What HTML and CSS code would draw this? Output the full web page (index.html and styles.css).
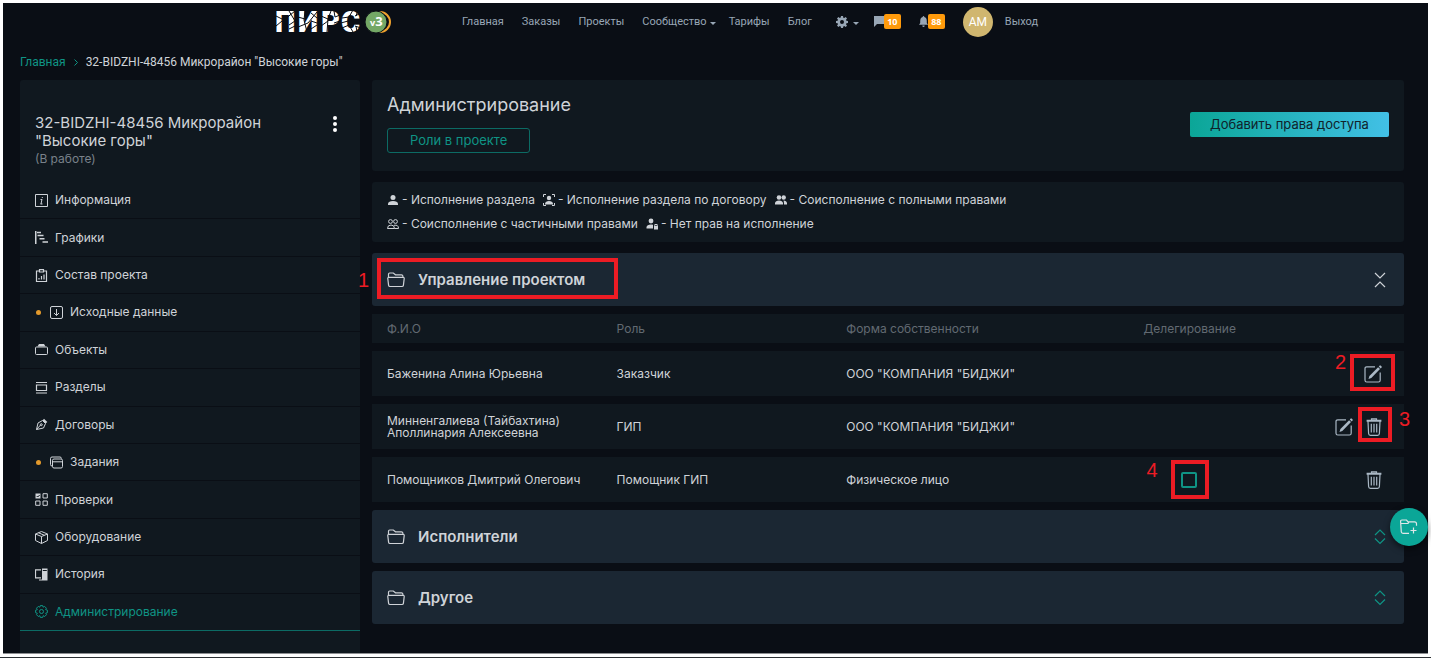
FILE: index.html
```html
<!DOCTYPE html>
<html lang="ru">
<head>
<meta charset="utf-8">
<title>Администрирование</title>
<link rel="stylesheet" href="styles.css">
</head>
<body>
<svg width="0" height="0" class="sprite" aria-hidden="true">
  <symbol id="folder" viewBox="0 0 18 16"><path d="M1.5 6V2.2Q1.5 1 2.7 1h3.6l2.2 1.8h6Q15.7 2.8 15.9 4v1.3M2 5.3h14q1.4 0 1.2 1.4l-.8 6.6q-.2 1.2-1.4 1.2H3q-1.2 0-1.4-1.2L.8 6.7Q.6 5.3 2 5.3Z"/></symbol>
  <symbol id="edit" viewBox="0 0 18 18"><path d="M11 1.8H2.8Q1 1.8 1 3.6v11.6Q1 17 2.8 17h11.6q1.8 0 1.8-1.8V7.5"/><path class="solid" d="M14.1 2.2l1.9 1.9-8.7 8.8-2.8 1 .9-2.9ZM14.8 1.5l.9-.9q.5-.4 1 0l.9.9q.4.5 0 1l-.9.9Z"/></symbol>
  <symbol id="trash" viewBox="0 0 16 18"><path d="M.6 3.2h14.8M.6 2.3h14.8M5.5 2V.8h5V2M2 3.5l.6 12q.1 1.8 1.8 1.8h7.2q1.7 0 1.8-1.8l.6-12M5.3 5.8v8.6M8 5.8v8.6M10.7 5.8v8.6"/></symbol>
  <symbol id="close-v" viewBox="0 0 12 16"><path d="M1 1l5 5 5-5M1 15l5-5 5 5"/></symbol>
  <symbol id="open-v" viewBox="0 0 12 16"><path d="M1 6l5-5 5 5M1 9.5l5 5 5-5"/></symbol>
</svg>
<div class="page">
  <header class="top">
    <a class="logo" href="#" aria-label="ПИРС v3">
      <svg width="115" height="36" viewBox="0 -5 115 36">
        <text class="logo-word" x="-1 22 45 65" y="23">ПИРС</text>
        <path class="cracks" d="M0 7l8 4 11-9M0 17l6-5M13 2l6 10-6 4M13 20l6-3M22 8l7 2M22 18l10-4 9-11M29 2l-1 9 3 12M35 12l6 2M35 4l6 5M35 20l6-4M45 7l7 3 3-8M45 17l7-5M52 10l-1 13M58 2l1 6 5-2M58 14l6-2M66 9l7-1 4-7M65 14l7-2M66 19l7-3 4 7M79 7l6-3M79 17l6 2M82 1l-2 6M81 23l-1-6"/>
        <circle class="ring" cx="104" cy="13" r="10"/>
        <circle class="ball" cx="100" cy="13" r="11"/>
        <text class="ver" x="94" y="17"><tspan class="ver-v">v</tspan>3</text>
      </svg>
    </a>
    <nav class="nav">
      <a href="#">Главная</a>
      <a href="#">Заказы</a>
      <a href="#">Проекты</a>
      <a href="#" class="drop close">Сообщество</a>
      <a href="#">Тарифы</a>
      <a href="#">Блог</a>
      <a href="#" class="drop gear" aria-label="Настройки"><svg width="12" height="12" viewBox="0 0 12 12"><path fill-rule="evenodd" d="M5 0h2l.3 1.7 1 .4L9.700 1 11 2.400l-1 1.300.4 1L12 5v2l-1.600.3-.4 1 1 1.400L9.600 11l-1.300-1-1 .4L7 12H5l-.3-1.600-1-.4L2.400 11 1 9.600l1-1.300-.4-1L0 7V5l1.600-.3.4-1-1-1.300L2.400 1l1.300 1 1-.4ZM6 4a2 2 0 1 0 0 4 2 2 0 0 0 0-4Z"/></svg></a>
      <a href="#" class="note" aria-label="Сообщения 10"><svg width="10" height="11" viewBox="0 0 10 11"><path d="M0 0h10v8H3L0 11Z"/></svg><span class="count">10</span></a>
      <a href="#" class="note" aria-label="Уведомления 88"><svg width="9" height="11" viewBox="0 0 9 11"><path d="M4.500 0q.8 0 .8.900Q7.800 1.500 7.800 5v2L9 8.800H0L1.200 7V5q0-3.500 2.500-4.100 0-.9.800-.9ZM3.300 9.500h2.400q0 1.500-1.200 1.500T3.300 9.500Z"/></svg><span class="count">88</span></a>
      <span class="avatar">AM</span>
      <a href="#">Выход</a>
    </nav>
  </header>

  <nav class="crumbs"><a href="#">Главная</a><svg width="4" height="7" viewBox="0 0 4 7"><path d="M.5.5l3 3-3 3"/></svg><span>32-BIDZHI-48456 Микрорайон "Высокие горы"</span></nav>

  <div class="columns">
    <aside class="side">
      <div class="project">
        <div>
          <h2>32-BIDZHI-48456 Микрорайон "Высокие горы"</h2>
          <p>(В работе)</p>
        </div>
        <button class="dots" aria-label="Меню проекта"><svg width="4" height="16" viewBox="0 0 4 16"><circle cx="2" cy="2" r="2"/><circle cx="2" cy="8" r="2"/><circle cx="2" cy="14" r="2"/></svg></button>
      </div>
      <nav class="menu">
        <a href="#"><svg viewBox="0 0 13 13"><path d="M.5.5h12v12H.5ZM7 5.200l-1 4.800M7.300 3v1M5.500 5.500H7M5.500 10h2"/></svg>Информация</a>
        <a href="#"><svg viewBox="0 0 13 13"><path d="M.7 0v13M2 1.500h4M2.500 4.500h6M4.500 7.700h5M7.500 11H13" stroke-width="1.600"/></svg>Графики</a>
        <a href="#"><svg viewBox="0 0 13 13"><path d="M4 2H1.500v10.500h10V2H9M4.500.600h4v2.400h-4ZM4 10.500V9M6.500 10.500V7M9 10.500v-5" stroke-width="1.200"/></svg>Состав проекта</a>
        <a href="#"><i></i><svg viewBox="0 0 13 13"><rect x=".5" y=".5" width="12" height="12" rx="1.500"/><path d="M6.500 3v6.500M4 7l2.500 2.500L9 7"/></svg>Исходные данные</a>
        <a href="#"><svg viewBox="0 0 13 13"><path class="solid" d="M2.500 3.500L4 1h5l1.500 2.500Z"/><rect x=".5" y="4" width="12" height="7.500" rx="1"/></svg>Объекты</a>
        <a href="#"><svg viewBox="0 0 13 13"><path d="M1 1.500h11M1 12h11M1.500 4h10v5.500h-10Z" stroke-width="1.200"/></svg>Разделы</a>
        <a href="#"><svg viewBox="0 0 13 13"><path d="M1.500 11.500L3 5l4.500-2.500 3 3L8.500 10ZM1.500 11.500l4.500-5"/><path class="solid" d="M7.500 2.500L9 .800l3.300 3.300-1.800 1.500Z"/><circle cx="6.300" cy="6.700" r="1"/></svg>Договоры</a>
        <a href="#"><i></i><svg viewBox="0 0 13 13"><path d="M2.500 10H2Q.5 10 .5 8.500V2.500Q.5 1 2 1h8q1.300 0 1.500 1.500"/><rect x="2.500" y="3" width="10" height="9" rx="1.500"/><path d="M2.500 5.800h10"/></svg>Задания</a>
        <a href="#"><svg viewBox="0 0 13 13"><path class="solid" d="M.5.500h5v5h-5Z"/><path d="M8 .700h4.300v4.300H8ZM.700 8H5v4.300H.700ZM8 8h4.300v4.300H8Z"/><path class="tick" d="M1.700 3l1 1 2-2"/></svg>Проверки</a>
        <a href="#"><svg viewBox="0 0 13 13"><path d="M6.500.500l6 2.500v6.500l-6 3-6-3V3ZM.5 3l6 2.500 6-2.500M6.500 5.500v7M3.500 1.800l6 2.500"/></svg>Оборудование</a>
        <a href="#"><svg viewBox="0 0 13 13"><path d="M6 1.800H.500v8H6M4 12h3" stroke-width="1.200"/><path class="solid" d="M7 .500h5.500v12H7Z"/><path class="tick" d="M7.800 2.500h4"/></svg>История</a>
        <a href="#" class="active"><svg viewBox="0 0 13 13"><path d="M5.300.600h2.400l.4 1.600 1.500-.8 1.800 1.800-.8 1.400 1.800.6v2.500l-1.700.5.8 1.500-1.800 1.800-1.500-.8-.5 1.700H5.300l-.5-1.700-1.500.8-1.800-1.800.8-1.500L.6 7.700V5.200l1.700-.5-.8-1.500 1.800-1.800 1.500.8Z"/><circle cx="6.500" cy="6.500" r="2"/></svg>Администрирование</a>
      </nav>
    </aside>

    <main class="main">
      <section class="panel head">
        <div>
          <h1>Администрирование</h1>
          <button class="outline">Роли в проекте</button>
        </div>
        <button class="primary">Добавить права доступа</button>
      </section>

      <section class="panel legend">
        <div>
          <span><svg viewBox="0 0 12 12"><circle cx="6" cy="3.500" r="2.500"/><path d="M1 11V9.500Q1.500 7 6 7t5 2.500V11Z"/></svg>- Исполнение раздела</span>
          <span><svg viewBox="0 0 12 12"><circle cx="6" cy="4" r="2.200"/><path d="M2 10.500V9.500Q2.500 7 6 7t4 2.500v1Z"/><path class="line" d="M.5 3V.500H3M9 .500h2.500V3M.5 9v2.500H3M9 11.500h2.500V9"/></svg>- Исполнение раздела по договору</span>
          <span><svg viewBox="0 0 12 12"><circle cx="4" cy="3.500" r="2.300"/><path d="M0 10.500V9Q.5 6.500 4 6.500T8 9v1.500Z"/><circle cx="8.700" cy="3.500" r="2.200"/><path d="M9 10.500h3V9q-.5-2.500-3.500-2.500Q9 7.500 9 10.500Z"/></svg>- Соисполнение с полными правами</span>
        </div>
        <div>
          <span><svg viewBox="0 0 12 12"><g class="line"><circle cx="3.500" cy="3.500" r="1.900"/><circle cx="8.500" cy="3.500" r="1.900"/><path d="M.5 10.500Q.5 7 4 7t3.500 3.500ZM7 7.300q4.500-.8 4.500 3.200h-4"/></g></svg>- Соисполнение с частичными правами</span>
          <span><svg viewBox="0 0 12 12"><circle cx="5" cy="3" r="2.400"/><path d="M.5 10.500V9Q1 6.500 5 6.500l2 .3v3.700ZM8 8h4v3.500H8Z"/><path class="line" d="M8.800 8V6.500h2.400V8"/></svg>- Нет прав на исполнение</span>
        </div>
      </section>

      <section class="group">
        <h3><svg class="ic" width="18" height="16"><use href="#folder"/></svg>Управление проектом</h3>
        <button class="toggle" aria-label="Свернуть"><svg class="ic" width="12" height="16"><use href="#close-v"/></svg></button>
        <span class="mark m1"></span><b class="num n1">1</b>
      </section>

      <table class="people">
        <thead><tr><th class="c-name">Ф.И.О</th><th class="c-role">Роль</th><th class="c-form">Форма собственности</th><th class="c-deleg">Делегирование</th><th></th></tr></thead>
        <tbody>
          <tr><td>Баженина Алина Юрьевна</td><td>Заказчик</td><td>ООО "КОМПАНИЯ "БИДЖИ"</td><td></td>
            <td class="acts"><button aria-label="Изменить"><svg class="ic" width="18" height="18"><use href="#edit"/></svg></button><span class="mark m2"></span><b class="num n2">2</b></td></tr>
          <tr><td>Минненгалиева (Тайбахтина) Аполлинария Алексеевна</td><td>ГИП</td><td>ООО "КОМПАНИЯ "БИДЖИ"</td><td></td>
            <td class="acts"><button aria-label="Изменить"><svg class="ic" width="18" height="18"><use href="#edit"/></svg></button><button aria-label="Удалить"><svg class="ic" width="16" height="18"><use href="#trash"/></svg></button><span class="mark m3"></span><b class="num n3">3</b></td></tr>
          <tr><td>Помощников Дмитрий Олегович</td><td>Помощник ГИП</td><td>Физическое лицо</td>
            <td class="deleg"><input type="checkbox" aria-label="Делегирование"><span class="mark m4"></span><b class="num n4">4</b></td>
            <td class="acts"><button aria-label="Удалить"><svg class="ic" width="16" height="18"><use href="#trash"/></svg></button></td></tr>
        </tbody>
      </table>

      <section class="group shut">
        <h3><svg class="ic" width="18" height="16"><use href="#folder"/></svg>Исполнители</h3>
        <button class="toggle" aria-label="Развернуть"><svg class="ic" width="12" height="16"><use href="#open-v"/></svg></button>
      </section>
      <section class="group shut">
        <h3><svg class="ic" width="18" height="16"><use href="#folder"/></svg>Другое</h3>
        <button class="toggle" aria-label="Развернуть"><svg class="ic" width="12" height="16"><use href="#open-v"/></svg></button>
      </section>
    </main>
  </div>
</div>
<button class="fab" aria-label="Добавить папку"><svg width="18" height="16" viewBox="0 0 18 16"><path d="M9 14.300H3Q1.500 14.300 1.300 13L.600 2.500Q.500 1 2 1h4.500L8 2.800h6.500q2 0 2 2v2M1 4.500h7l1-1.500M13.500 8.500v6M10.500 11.500h6"/></svg></button>
</body>
</html>
```
FILE: styles.css
```css
* { box-sizing: border-box; }
html { background: #fff; }
body {
  margin: 0;
  min-height: 100vh;
  display: flex;
  padding: 3px 3px 3px;
  border-bottom: 1px solid #2b2f33;
  font: 13px/18px Inter, "Noto Sans", sans-serif;
  color: #cfd3d8;
}
a { color: inherit; text-decoration: none; }
button { font: inherit; color: inherit; background: none; border: 0; padding: 0; cursor: pointer; }
h1, h2, h3, p { margin: 0; font-weight: 400; }
svg { display: block; flex: none; }
.sprite { position: absolute; }
.ic { fill: none; stroke: currentColor; stroke-width: 1.2; }
.solid { fill: currentColor; stroke: none; }

.page {
  flex: 1;
  display: flex;
  flex-direction: column;
  background: #0a0e15;
  border-bottom: 1px solid #8d8f92;
}

.top { display: flex; align-items: center; height: 37px; padding-left: 273px; font: 11px/16px Roboto, sans-serif; color: #98a6b5; }
.logo { margin-right: 71px; }
.logo-word { font: 900 29px Roboto, sans-serif; fill: #fff; }
.cracks { fill: none; stroke: #0a0e15; stroke-width: 1; }
.ring { fill: #0a0e15; stroke: #f0a22e; stroke-width: 2; }
.ball { fill: #74a866; stroke: #0a0e15; stroke-width: 1; }
.ver { font: 700 13px "Open Sans", sans-serif; fill: #fff; }
.ver-v { font-size: 9px; }
.nav { display: flex; align-items: center; gap: 18px; }
.drop { display: flex; align-items: center; gap: 3px; }
.drop::after { content: ""; border: 3px solid transparent; border-top-color: currentColor; border-bottom: 0; margin-top: 4px; }
.close { margin-right: -5px; }
.gear { gap: 5px; margin: 0 -3px 0 6px; }
.nav svg { fill: currentColor; }
.note { display: flex; align-items: center; }
.count { background: #ff9a0b; color: #fff; border-radius: 2px; font: 700 9px/15px "Open Sans", sans-serif; width: 17px; text-align: center; }
.avatar { width: 30px; height: 30px; border-radius: 50%; background: #d0b66f; color: #fff; text-align: center; font-size: 12px; line-height: 30px; margin-right: -6px; }

.crumbs { display: flex; align-items: center; gap: 8px; height: 40px; padding: 4px 17px 0; font: 12px/16px Roboto, sans-serif; }
.crumbs a { color: #0f9485; }
.crumbs svg { fill: none; stroke: #0f9485; }

.columns { flex: 1; display: flex; gap: 12px; padding: 0 24px 0 17px; }
.side { flex: 0 0 340px; display: flex; flex-direction: column; background: #10181f; border-radius: 3px 3px 0 0; padding-bottom: 22px; }
.project { display: flex; justify-content: space-between; padding: 34px 23px 14px 15px; }
.project > div { max-width: 240px; }
.project h2 { font-size: 15px; line-height: 18px; }
.project p { color: #79818a; font-size: 12px; }
.dots { align-self: flex-start; margin-top: 2px; }
.dots svg { fill: #fff; }
.menu { flex: 1; display: flex; flex-direction: column; font-size: 12px; }
.menu a { flex: 1; min-height: 36px; display: flex; align-items: center; gap: 7px; padding: 0 15px; border-bottom: 1px solid #0a0e15; }
.menu svg { width: 13px; height: 13px; fill: none; stroke: currentColor; }
.menu i { width: 5px; height: 5px; border-radius: 50%; background: #e39a2c; margin: 0 2px 0 1px; }
.menu .solid { fill: currentColor; stroke: none; }
.menu .tick { stroke: #10181f; }
.menu .active { color: #0f9485; border-color: #0c6b64; }

.main { flex: 1; min-width: 0; }
.panel { background: #10181f; border-radius: 3px; }
.head { display: flex; justify-content: space-between; align-items: center; padding: 15px 15px 18px; margin-bottom: 11px; }
.head h1 { font-size: 18px; line-height: 20px; margin-bottom: 13px; }
.outline { display: block; border: 1px solid #0c6b64; border-radius: 3px; color: #0f9485; padding: 3px 22px; height: 25px; line-height: 17px; }
.primary { height: 25px; width: 199px; border-radius: 2px; color: #10222b; background: linear-gradient(90deg, #0ba697, #42c0e6); }
.legend { padding: 6px 15px; margin-bottom: 11px; font-size: 12px; line-height: 24px; }
.legend div { display: flex; flex-wrap: wrap; column-gap: 8px; }
.legend span { display: flex; align-items: center; gap: 3px; }
.legend svg { width: 12px; height: 12px; fill: currentColor; }
.line { fill: none; stroke: currentColor; }

.group { position: relative; display: flex; justify-content: space-between; align-items: center; height: 53px; padding: 0 18px 0 15px; background: #1b2733; border-radius: 3px; }
.group h3 { display: flex; align-items: center; gap: 13px; font-size: 15px; font-weight: 600; }
.group .toggle { color: #cfd3d8; }
.shut .toggle { color: #0f9485; }
.shut + .shut { margin-top: 8px; }

.people { width: 100%; border-collapse: separate; border-spacing: 0 8px; table-layout: fixed; }
.people th { height: 29px; padding: 0 0 0 15px; background: #10181f; color: #626a72; font-weight: 400; text-align: left; font-size: 12px; }
.people td { height: 45px; padding: 0 0 0 15px; background: #10181f; font-size: 12px; line-height: 12px; }
.c-name, .c-role { width: 22.25%; }
.c-form { width: 28.8%; }
.c-deleg { width: 13%; }
.people .acts { position: relative; text-align: right; padding-right: 22px; color: #aab8c5; }
.acts button { margin-left: 13px; vertical-align: middle; }
.people .deleg { position: relative; padding-left: 53px; }
.deleg input { appearance: none; display: block; width: 16px; height: 16px; margin: 0; border: 2px solid #0f9485; border-radius: 2px; }

.mark { position: absolute; border: 4px solid #ed1c24; }
.num { position: absolute; font: 20px/20px "Liberation Sans", Arial, sans-serif; color: #ed1c24; }
.m1 { left: 5px; top: 5px; width: 241px; height: 41px; }
.n1 { left: -14px; top: 17px; }
.m2 { right: 9px; top: 3px; width: 45px; height: 37px; }
.n2 { right: 58px; top: 1px; }
.m3 { right: 12px; top: 3px; width: 34px; height: 35px; }
.n3 { right: -6px; top: 5px; }
.m4 { left: 43px; top: 3px; width: 38px; height: 39px; }
.n4 { left: 18px; top: 3px; }

.fab { position: fixed; right: 3px; top: 508px; width: 38px; height: 38px; border-radius: 50%; background: #0ba697; color: #dfe6e8; display: grid; place-items: center; box-shadow: 0 3px 6px #0008; }
.fab svg { fill: none; stroke: currentColor; stroke-width: 1.2; }
```
